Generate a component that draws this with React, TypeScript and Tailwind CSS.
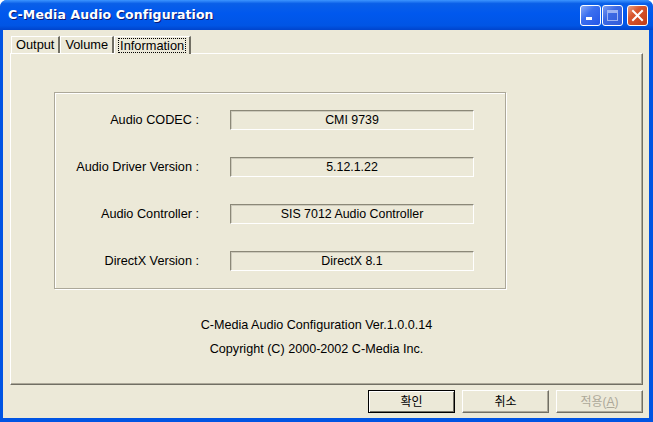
import React from "react";

const rows = [
  { label: "Audio CODEC :", value: "CMI 9739" },
  { label: "Audio Driver Version :", value: "5.12.1.22" },
  { label: "Audio Controller :", value: "SIS 7012 Audio Controller" },
  { label: "DirectX Version :", value: "DirectX 8.1" },
];

const font = { fontFamily: '"Liberation Sans", "Noto Sans CJK KR", sans-serif' };

const CaptionButton: React.FC<{ kind: "min" | "max" | "close" }> = ({ kind }) => {
  const bg =
    kind === "close"
      ? "bg-[linear-gradient(135deg,#e8a184_0%,#d9572f_35%,#c23c16_100%)]"
      : kind === "max"
      ? "bg-[linear-gradient(135deg,#7c9cf0_0%,#3d6ae4_40%,#2f5bd9_100%)]"
      : "bg-[linear-gradient(135deg,#88aaf7_0%,#3c70ef_40%,#2256e8_100%)]";
  return (
    <div
      className={`w-[21px] h-[21px] rounded-[3px] border border-white flex items-center justify-center ${bg}`}
    >
      <svg width="13" height="13" viewBox="0 0 13 13">
        {kind === "min" && <rect x="2" y="8" width="6" height="3" fill="white" />}
        {kind === "max" && (
          <g fill="none" stroke="#9db4f3">
            <rect x="1.5" y="1.5" width="10" height="10" />
            <rect x="1.5" y="1.5" width="10" height="2" fill="#9db4f3" />
          </g>
        )}
        {kind === "close" && (
          <path d="M2 2 L11 11 M11 2 L2 11" stroke="white" strokeWidth="2" strokeLinecap="square" />
        )}
      </svg>
    </div>
  );
};

const Tab: React.FC<{ label: string; active?: boolean }> = ({ label, active }) => (
  <div
    className={`h-[17px] px-[4px] flex items-center border-l border-t border-white border-r-2 border-r-[#716f64] text-[12.8px] text-black ${
      active ? "-mb-[1px] h-[18px] bg-[#ece9d8] z-10" : ""
    }`}
  >
    <span className={active ? "outline outline-1 outline-dotted outline-black px-[1px] leading-[13px]" : ""}>
      {label}
    </span>
  </div>
);

const Button: React.FC<{ label: React.ReactNode; def?: boolean; disabled?: boolean }> = ({
  label,
  def,
  disabled,
}) => (
  <div
    className={`w-[87px] h-[23px] flex items-center justify-center text-[12px] bg-[#ece9d8] ${
      def
        ? "border border-black shadow-[inset_1px_1px_0_#fff,inset_-1px_-1px_0_#716f64]"
        : "border-t border-l border-white border-r border-b border-r-[#716f64] border-b-[#716f64] shadow-[inset_-1px_-1px_0_#aca899]"
    } ${disabled ? "text-[#aca899]" : "text-black"}`}
  >
    {label}
  </div>
);

export default function App() {
  return (
    <div
      className="w-[653px] h-[422px] flex flex-col bg-[#0054e3] rounded-t-[7px] overflow-hidden"
      style={font}
    >
      {/* title bar */}
      <div className="h-[30px] flex items-center pl-[8px] pr-[5px] bg-[linear-gradient(180deg,#3d95ff_0%,#0a5fe8_12%,#0058ee_45%,#0055e5_85%,#0044cc_100%)]">
        <div
          className="flex-1 text-white font-bold text-[12.5px] [text-shadow:1px_1px_0_#0a1874]"
          style={{ fontFamily: '"DejaVu Sans", sans-serif', letterSpacing: "0.1px" }}
        >
          C-Media Audio Configuration
        </div>
        <div className="flex gap-[1px]">
          <CaptionButton kind="min" />
          <CaptionButton kind="max" />
          <div className="w-[2px]" />
          <CaptionButton kind="close" />
        </div>
      </div>

      {/* body */}
      <div className="flex-1 ml-[3px] mr-[4px] mb-[4px] bg-[#ece9d8] flex flex-col pt-[6px] pl-[7px] pr-[6px]">
        <div className="flex pl-[1px]">
          <Tab label="Output" />
          <Tab label="Volume" />
          <Tab label="Information" active />
        </div>
        <div className="h-[332px] border-l border-t border-white border-r border-b border-r-[#716f64] border-b-[#716f64] shadow-[inset_-1px_-1px_0_#aca899] flex flex-col">
          <div className="ml-[43px] mt-[38px] w-[452px] h-[197px] border border-[#aca899] shadow-[inset_1px_1px_0_#fff,1px_1px_0_#fff] flex flex-col pt-[17px] gap-[27px]">
            {rows.map((r) => (
              <div key={r.label} className="flex items-center h-[20px]">
                <div className="w-[144px] text-right text-[12.7px] text-black pt-[1px]">{r.label}</div>
                <div className="ml-[31px] w-[244px] h-[20px] border-t border-l border-[#8b8878] border-b border-r border-b-white border-r-white shadow-[inset_1px_1px_0_#cdcabb] flex items-center justify-center text-[12.4px] text-black">
                  {r.value}
                </div>
              </div>
            ))}
          </div>
          <div className="mt-[29px] pr-[20px] flex flex-col items-center gap-[9px] text-[12.6px] text-black leading-[15px]">
            <div>C-Media Audio Configuration Ver.1.0.0.14</div>
            <div>Copyright (C) 2000-2002 C-Media Inc.</div>
          </div>
        </div>
        <div className="flex justify-end gap-[7px] mt-[5px]">
          <Button label="확인" def />
          <Button label="취소" />
          <Button
            disabled
            label={
              <span>
                적용(<span className="underline">A</span>)
              </span>
            }
          />
        </div>
      </div>
    </div>
  );
}
